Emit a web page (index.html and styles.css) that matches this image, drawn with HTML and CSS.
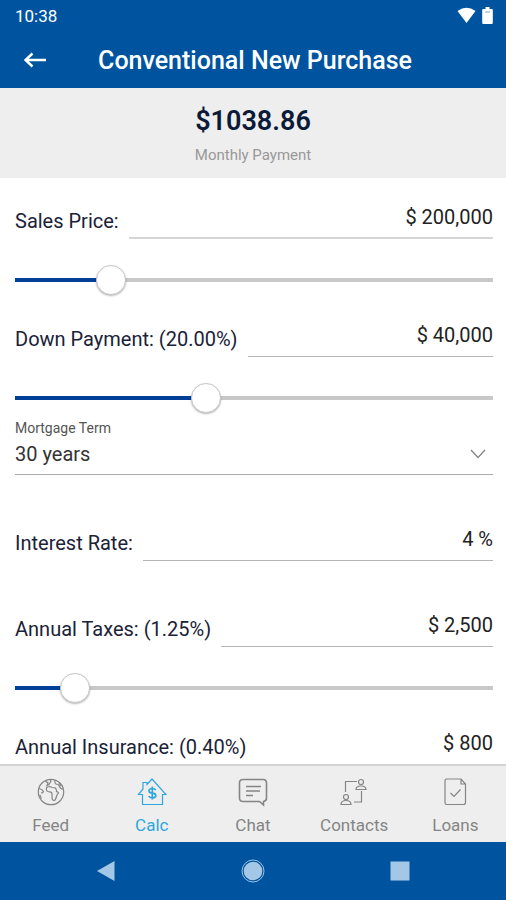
FILE: index.html
```html
<!DOCTYPE html>
<html lang="en">
<head>
<meta charset="utf-8">
<meta name="viewport" content="width=device-width, initial-scale=1">
<title>Conventional New Purchase</title>
<link rel="stylesheet" href="styles.css">
</head>
<body>
<div class="status">
  <span>10:38</span>
  <div class="status-icons">
    <svg width="19" height="18" viewBox="0 0 19 18"><path d="M.5 4Q9.500-2.500 18.500 4L9.500 16z" fill="#fff"/></svg>
    <svg width="11" height="18" viewBox="0 0 11 18"><path d="M3.500 0h4v2h2.300q1 0 1 1v13q0 1-1 1H1.200q-1 0-1-1V3q0-1 1-1h2.300z" fill="#fff"/><path d="M3 5h5" stroke="#7fa8d0"/></svg>
  </div>
</div>
<header class="header">
  <button class="back" type="button" aria-label="Back">
    <svg width="24" height="18" viewBox="0 0 24 18"><path d="M22 9H1.500M8.500 2.500 1.500 9l7 6.500" fill="none" stroke="#fff" stroke-width="2.500"/></svg>
  </button>
  <h1 class="title">Conventional New Purchase</h1>
</header>
<section class="summary">
  <strong class="amount">$1038.86</strong>
  <span class="caption">Monthly Payment</span>
</section>
<main class="form">
  <div class="field">
    <label class="label" for="price">Sales Price:</label>
    <input class="value focused" id="price" type="text" value="$ 200,000">
  </div>
  <input class="slider" type="range" min="0" max="1000" value="200" aria-label="Sales price" style="--fill:20%">
  <div class="field">
    <label class="label" for="down">Down Payment: (20.00%)</label>
    <input class="value" id="down" type="text" value="$ 40,000">
  </div>
  <input class="slider" type="range" min="0" max="1000" value="400" aria-label="Down payment" style="--fill:40%">
  <div class="term">
    <label class="term-label" for="term">Mortgage Term</label>
    <div class="term-box">
      <select class="term-select" id="term"><option>30 years</option></select>
      <svg class="chevron" width="16" height="10" viewBox="0 0 16 10"><path d="m1 1 7 7.500L15 1" fill="none" stroke="#858585" stroke-width="1.300"/></svg>
    </div>
  </div>
  <div class="field spaced">
    <label class="label" for="rate">Interest Rate:</label>
    <input class="value" id="rate" type="text" value="4 %">
  </div>
  <div class="field">
    <label class="label" for="taxes">Annual Taxes: (1.25%)</label>
    <input class="value" id="taxes" type="text" value="$ 2,500">
  </div>
  <input class="slider" type="range" min="0" max="1000" value="125" aria-label="Annual taxes" style="--fill:12.5%">
  <div class="field">
    <label class="label" for="insurance">Annual Insurance: (0.40%)</label>
    <input class="value" id="insurance" type="text" value="$ 800">
  </div>
</main>
<nav class="tabs">
  <a class="tab" href="#feed">
    <svg class="icon" viewBox="0 0 30 30"><circle cx="15" cy="15" r="12.700"/><path d="M3 11.500c2 .5 3.500 1 4.500 3-.5 1.500-1.500 1.500-2.500 1.500M3.500 18c1.500.5 1.500 2 1.500 4M9.500 4l2.500 2-1 2.500 2-1 2-3.500-1-1.500M10.500 11c.5-1.500 2-1.500 3.500-1.500l2 1 3.500.5c.5 1.500 1.500 2 1 3.500 1 .5 2 .5 2 1.500-1 1.500-2 2-2 3.500-.5 2-1 4-2.500 4s-2-2.500-2-4 .5-3-.5-4-3.500 0-4.500-1.500c-1-1.500-.5-3-.5-3zM18.500 3.500c1 1 0 3 1.500 3.500s2.500 0 3 1.500 1 3.500 4 3.500M23 6l2 3"/></svg>
    <span>Feed</span>
  </a>
  <a class="tab active" href="#calc">
    <svg class="icon" viewBox="0 0 30 30"><path d="M5.500 17.500v10h20v-10H29L15 2 10 7.500V5.500H6V12l-4.500 5.500z"/><path d="M18.800 13q-1-1.500-3.500-1.500-3.300 0-3.300 2.300t3.300 2.300 3.500 2.400-3.500 2.300q-2.800 0-3.500-1.800M15.300 9.500v13" stroke-width="1.700"/></svg>
    <span>Calc</span>
  </a>
  <a class="tab" href="#chat">
    <svg class="icon" viewBox="0 0 30 30"><path d="M5 2.500h20q3.500 0 3.500 3.500v15q0 3-3 3.500v3.500L21.500 24.500H5q-3.500 0-3.500-3.500V6q0-3.500 3.500-3.500z" stroke-width="1.600"/><path d="M8 9.500h15M8 14h14M8 18.500h7" stroke-width="1.600"/></svg>
    <span>Chat</span>
  </a>
  <a class="tab" href="#contacts">
    <svg class="icon" viewBox="0 0 30 30"><path d="M6.500 15V4.500H18M22.500 14v11H15"/><circle cx="22" cy="5" r="2.500"/><path d="M17 12.500q0-3.500 5-3.500t5 3.500z"/><circle cx="7" cy="20" r="2.500"/><path d="M2 27.500Q2 23.500 7 23.500t5 4z"/></svg>
    <span>Contacts</span>
  </a>
  <a class="tab" href="#loans">
    <svg class="icon" viewBox="0 0 30 30"><path d="M6.500 2h14.500l4.500 5v18.500q0 2-2 2h-17q-1.500 0-1.500-2v-22Q5 2 6.500 2zM21 2v5h4.500"/><path d="m10.500 16 3.500 3.500 6.500-7"/></svg>
    <span>Loans</span>
  </a>
</nav>
<footer class="system">
  <button class="key" type="button" aria-label="Back"><svg width="22" height="22" viewBox="0 0 22 22"><path d="M2 11 19.500 1v20z"/></svg></button>
  <button class="key" type="button" aria-label="Home"><svg width="24" height="24" viewBox="0 0 24 24"><circle cx="12" cy="12" r="9.300"/><circle cx="12" cy="12" r="11" fill="none" stroke="#9dc2e2"/></svg></button>
  <button class="key" type="button" aria-label="Recent apps"><svg width="20" height="20" viewBox="0 0 20 20"><path d="M.5.5h19v19H.5z"/></svg></button>
</footer>
</body>
</html>
```
FILE: styles.css
```css
* {
  box-sizing: border-box;
}

body {
  display: flex;
  flex-direction: column;
  height: 100vh;
  margin: 0;
  overflow: hidden;
  background: #fff;
  font-family: Roboto, sans-serif;
  font-size: 20px;
}

button,
input,
select {
  font: inherit;
  margin: 0;
  padding: 0;
  border: 0;
  border-radius: 0;
  background: none;
  appearance: none;
}

.status,
.header,
.summary,
.tabs,
.system {
  flex: none;
}

.status {
  display: flex;
  align-items: center;
  justify-content: space-between;
  height: 32px;
  padding: 0 13px 0 15px;
  background: #00549f;
  color: #fff;
  font-size: 17px;
  font-weight: 450;
}

.status-icons {
  display: flex;
  align-items: center;
  gap: 6px;
}

.header {
  display: grid;
  grid-template-columns: 24px 1fr 20px;
  align-items: center;
  height: 56px;
  padding: 0 24px;
  background: #00549f;
  color: #fff;
}

.back {
  display: flex;
}

.title {
  margin: 0;
  font-size: 25px;
  font-weight: 480;
  text-align: center;
  white-space: nowrap;
}

.summary {
  display: flex;
  flex-direction: column;
  align-items: center;
  gap: 8px;
  height: 90px;
  padding-top: 17px;
  background: #eee;
}

.amount {
  color: #0b1a37;
  font-size: 27px;
  font-weight: 650;
  line-height: 32px;
}

.caption {
  color: #999;
  font-size: 15px;
  line-height: 20px;
}

.form {
  display: flex;
  flex: 1;
  flex-direction: column;
  min-height: 0;
  padding: 17px 13px 0 15px;
  overflow: hidden;
}

.field {
  display: flex;
  flex: none;
  align-items: stretch;
  gap: 10px;
  height: 44px;
}

.label {
  padding-top: 7px;
  color: #1a2238;
  font-weight: 440;
  line-height: 38px;
  white-space: nowrap;
}

.value {
  flex: 1;
  min-width: 0;
  padding-top: 1px;
  border-bottom: 1px solid #b5b5b5;
  color: #222;
  text-align: right;
}

.value.focused {
  border-bottom: 2px solid #d6d6d6;
}

.slider {
  flex: none;
  width: calc(100% + 30px);
  height: 30px;
  margin: 26px -15px 18px;
  background: linear-gradient(to right, #003f98 var(--fill), #c8c8c8 var(--fill)) center / calc(100% - 30px) 4px no-repeat;
}

.slider::-webkit-slider-thumb {
  width: 30px;
  height: 30px;
  border: 1px solid #c8c8c8;
  border-radius: 50%;
  background: #fff;
  box-shadow: 0 1px 2px rgba(0, 0, 0, 0.3);
  appearance: none;
}

.term {
  flex: none;
  margin-top: -12px;
}

.term-label {
  display: block;
  color: #555;
  font-size: 14px;
  line-height: 18px;
}

.term-box {
  display: grid;
  align-items: center;
  height: 38px;
  padding-bottom: 4px;
  border-bottom: 1px solid #aaa;
}

.term-select,
.chevron {
  grid-area: 1 / 1;
}

.term-select {
  width: 100%;
  color: #333;
}

.chevron {
  justify-self: end;
  margin-right: 7px;
  pointer-events: none;
}

.spaced {
  margin: 42px 0;
}

.tabs {
  display: grid;
  grid-template-columns: repeat(5, 1fr);
  height: 78px;
  border-top: 2px solid #d4d4d4;
  background: #eee;
}

.tab {
  display: flex;
  flex-direction: column;
  align-items: center;
  gap: 6px;
  padding-top: 11px;
  color: #858585;
  font-size: 17px;
  line-height: 24px;
  text-decoration: none;
}

.tab.active {
  color: #2da7df;
}

.icon {
  width: 30px;
  height: 30px;
  fill: none;
  stroke: currentColor;
  stroke-width: 1.2;
}

.system {
  display: grid;
  grid-template-columns: repeat(3, 1fr);
  height: 58px;
  padding: 0 33px;
  background: #00549f;
}

.key {
  display: flex;
  align-items: center;
  justify-content: center;
  fill: #a5c7e6;
}
```
